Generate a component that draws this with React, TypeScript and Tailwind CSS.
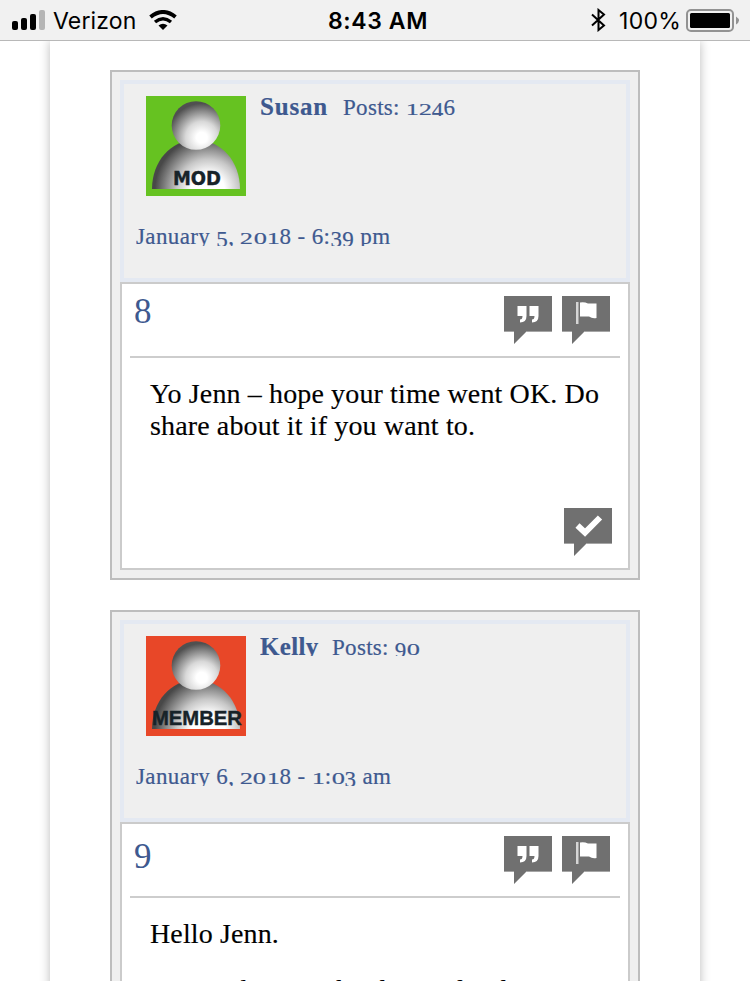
import React from "react";

type Mark = "quote" | "flag" | "check";

interface Post {
    id: string;
    author: string;
    count: string;
    date: string;
    role: string;
    color: string;
    labelSize: number;
    labelWidth: number;
    paragraphs: string[];
}

const posts: Post[] = [
    {
        id: "8",
        author: "Susan",
        count: "1246",
        date: "January 5, 2018 - 6:39 pm",
        role: "MOD",
        color: "#66c221",
        labelSize: 19,
        labelWidth: 48,
        paragraphs: ["Yo Jenn – hope your time went OK. Do\nshare about it if you want to."],
    },
    {
        id: "9",
        author: "Kelly",
        count: "90",
        date: "January 6, 2018 - 1:03 am",
        role: "MEMBER",
        color: "#e84728",
        labelSize: 20,
        labelWidth: 90,
        paragraphs: ["Hello Jenn.", "I am so keen on her house for their"],
    },
];

// Text figures: 0-2 sit at x-height, 3 4 5 7 9 drop below the baseline
function Figures({ text }: { text: string }) {
    return (
        <>
            {text.split(/([0-2]|[34579])/).map((part, i) => {
                if (/^[0-2]$/.test(part)) {
                    return <span key={i} className="inline-block origin-[50%_83%] scale-x-[1.15] scale-y-[0.75] leading-none px-[0.025em]">{part}</span>;
                }
                if (/^[34579]$/.test(part)) {
                    return <span key={i} className="align-[-0.15em] leading-none">{part}</span>;
                }
                return part;
            })}
        </>
    );
}

function Avatar({ post }: { post: Post }) {
    const head = `head-${post.id}`;
    const body = `body-${post.id}`;
    return (
        <svg className="block w-[100px] h-[100px]" viewBox="0 0 100 100">
            <defs>
                <radialGradient id={head} cx="0.62" cy="0.75" r="0.74">
                    <stop offset="0.15" stopColor="#fff" />
                    <stop offset="0.45" stopColor="#d8d8d8" />
                    <stop offset="0.95" stopColor="#505050" />
                </radialGradient>
                <radialGradient id={body} gradientUnits="userSpaceOnUse" cx="62" cy="94" r="56">
                    <stop offset="0.3" stopColor="#fff" />
                    <stop offset="0.55" stopColor="#c8c8c8" />
                    <stop offset="0.95" stopColor="#484848" />
                </radialGradient>
            </defs>
            <rect width="100" height="100" fill={post.color} />
            <path d="M6 93C6 66 24 44 50 44S94 66 94 93Z" fill={`url(#${body})`} />
            <circle cx="50" cy="29.500" r="24.300" fill={`url(#${head})`} />
            <text
                x="51"
                y="89"
                textAnchor="middle"
                textLength={post.labelWidth}
                lengthAdjust="spacingAndGlyphs"
                fontSize={post.labelSize}
                fontWeight="700"
                fontFamily={post.role === "MOD" ? "DejaVu Sans, sans-serif" : "Liberation Sans, sans-serif"}
                fill="#172329"
                stroke="#172329"
                strokeWidth="0.4"
            >
                {post.role}
            </text>
        </svg>
    );
}

function Bubble({ mark }: { mark: Mark }) {
    return (
        <svg className="block w-12 h-12 shrink-0" viewBox="0 0 48 48">
            <path d="M0 0H48V36H22L10 48V36H0Z" fill="#707070" />
            <path d="M0 35.500H10M22 35.500H48" stroke="#a5a5a5" />
            {mark === "quote" && (
                <path d="M13.500 10h9v10q0 6.500-6.500 6.500v-3q2.500 0 2.500-3.500h-5ZM25.500 10h9v10q0 6.500-6.500 6.500v-3q2.500 0 2.500-3.500h-5Z" fill="#fff" />
            )}
            {mark === "flag" && (
                <>
                    <path d="M14 6h2.500v22H14Z" fill="#d5d5d5" />
                    <path d="M18 6.500q4-1 8 1h8.500v14.500q-4 1-7.500-1.500H18Z" fill="#fff" />
                </>
            )}
            {mark === "check" && <path d="m13.500 17.500 7.500 7L36 9.500" fill="none" stroke="#fff" strokeWidth="6" />}
        </svg>
    );
}

function PostCard({ post }: { post: Post }) {
    return (
        <article className="w-[530px] h-[510px] shrink-0 border-2 border-[#bdbdbd] bg-[#efefef] p-2">
            <header className="h-[202px] border-4 border-[#e4e9f2] pt-3 pl-3 text-[#3e598f] [-webkit-text-stroke:0.2px]">
                <div className="flex pl-[10px] gap-[14px]">
                    <Avatar post={post} />
                    <div className="flex h-5 overflow-hidden whitespace-pre text-[23px] leading-[22px]">
                        <b className={post.id === "8" ? "w-[83px] text-[25px] tracking-[0.8px]" : "w-[72px] text-[25px] tracking-[0.3px]"}>{post.author}</b>
                        <span className="tracking-[0.3px]">Posts: <Figures text={post.count} /></span>
                    </div>
                </div>
                <div className="mt-[28px] h-[22px] overflow-hidden whitespace-pre text-[23px] leading-[26px] tracking-[0.38px]">
                    <Figures text={post.date} />
                </div>
            </header>
            <section className="flex flex-col h-[288px] border-2 border-[#cbcbcb] bg-white">
                <div className="flex justify-between h-[74px] mx-2 border-b-2 border-[#cdcdcd] pt-3 pl-1 pr-[10px]">
                    <span className="text-[35px] leading-8 text-[#3e598f]"><Figures text={post.id} /></span>
                    <div className="flex gap-[10px]">
                        <Bubble mark="quote" />
                        <Bubble mark="flag" />
                    </div>
                </div>
                <div className="grow flex flex-col gap-6 pt-5 pl-7 text-[28px] leading-8 tracking-[0.13px] whitespace-pre text-black [-webkit-text-stroke:0.15px]">
                    {post.paragraphs.map((text) => (
                        <p key={text}>{text}</p>
                    ))}
                </div>
                <div className="flex justify-end pr-4 pb-3">
                    <Bubble mark="check" />
                </div>
            </section>
        </article>
    );
}

function StatusBar() {
    return (
        <div className="relative z-10 flex items-center h-[41px] shrink-0 border-b border-[#b8b8b8] bg-[#f1f1f1] pl-3 pr-[11px] font-['Inter','Liberation_Sans',sans-serif] text-[23px] text-black">
            <svg className="w-[33px] h-5 shrink-0" viewBox="0 0 33 20">
                <rect y="11" width="6" height="9" rx="2" />
                <rect x="9" y="8" width="6" height="12" rx="2" />
                <rect x="18" y="4" width="6" height="16" rx="2" />
                <rect x="27" width="6" height="20" rx="2" fill="#b5b5b5" />
            </svg>
            <span className="w-[104px] shrink-0 pl-2 pt-[2px] tracking-[0.15px]">Verizon</span>
            <svg className="w-7 h-5 shrink-0" viewBox="0 0 28 20" fill="none" stroke="#000" strokeWidth="4">
                <path d="M1.500 7Q14-3 26.500 7" />
                <path d="M6 12Q14 5.500 22 12" strokeWidth="3.500" />
                <path d="M9.500 15.500Q14 12 18.500 15.500L14 20Z" fill="#000" stroke="none" />
            </svg>
            <span className="ml-[151px] w-[263px] shrink-0 pt-[2px] font-semibold tracking-[0.6px]">8:43 AM</span>
            <svg className="w-[15px] h-6 shrink-0" viewBox="0 0 15 24" fill="none" stroke="#000" strokeWidth="2">
                <path d="M1 6.500 13 17.500 7.500 22V2L13 6.500 1 17.500" />
            </svg>
            <span className="w-[66px] shrink-0 ml-[13px] pt-[2px] tracking-[0.3px]">100%</span>
            <svg className="ml-auto -mr-[1px] w-[54px] h-6 shrink-0" viewBox="0 0 54 24">
                <rect x="1" y="2" width="46" height="21" rx="4" fill="none" stroke="#929292" strokeWidth="2" />
                <rect x="4" y="5" width="40" height="15" rx="1.500" />
                <path d="M50 8.500q3 2 3 4t-3 4Z" fill="#929292" />
            </svg>
        </div>
    );
}

export default function App() {
    return (
        <div className="flex flex-col w-[750px] h-[981px] overflow-hidden bg-white font-['Georgia','Liberation_Serif',serif]">
            <StatusBar />
            <main className="flex flex-col items-center gap-[30px] w-[650px] h-[960px] shrink-0 mx-auto pt-[29px] bg-white shadow-[0_0_10px_rgba(0,0,0,0.27)]">
                {posts.map((post) => (
                    <PostCard key={post.id} post={post} />
                ))}
            </main>
        </div>
    );
}
